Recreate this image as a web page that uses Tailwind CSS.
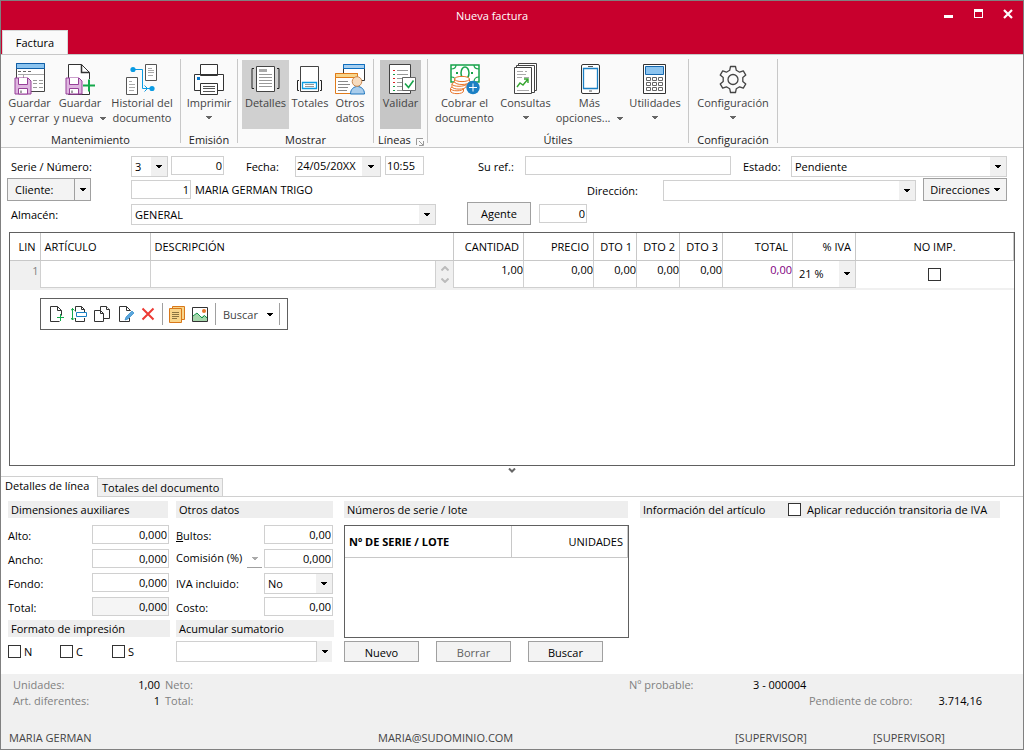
<!DOCTYPE html>
<html lang="es">
<head>
<meta charset="utf-8">
<title>Nueva factura</title>
<script src="https://cdn.jsdelivr.net/npm/@tailwindcss/browser@4"></script>
</head>
<body class="min-h-screen flex flex-col border border-[#808080] bg-white font-['Open_Sans','Noto_Sans',sans-serif] text-[11px] leading-[15px] text-black">

<svg class="hidden" aria-hidden="true">
  <symbol id="arrow" viewBox="0 0 6 3"><path d="M0 0h6v1H5v1H4v1H2V2H1V1H0z" fill="currentColor" shape-rendering="crispEdges"/></symbol>
  <symbol id="floppy" viewBox="0 0 18 18">
    <path d="M1 1h13l3 3v13H1z" fill="#dfb6e0" stroke="#963f98"/>
    <path d="M4.500 1v6.500h9V1" fill="#fff" stroke="#963f98"/>
    <path d="M4.500 17v-5.500h9V17z" fill="#fff" stroke="#963f98"/><path d="M7 13.500v2.500" stroke="#444"/>
  </symbol>
</svg>

<header class="bg-[#c8002d] text-white">
  <div class="h-[29px] grid grid-cols-3 items-center">
    <span></span>
    <h1 class="text-center pr-10">Nueva factura</h1>
    <div class="flex justify-end gap-[20px] pr-[10px] items-center -mt-1">
      <button aria-label="Minimizar" class="block"><svg width="10" height="10" class="block"><rect x="1" y="6" width="9" height="3" fill="#fff"/></svg></button>
      <button aria-label="Maximizar" class="block"><svg width="10" height="10" shape-rendering="crispEdges" class="block"><path d="M1 0h9v9H1zM2 3v5h7V3z" fill="#fff" fill-rule="evenodd"/></svg></button>
      <button aria-label="Cerrar" class="block"><svg width="10" height="10" class="block"><path d="M1 1l8 8M9 1L1 9" stroke="#fff" stroke-width="2.200"/></svg></button>
    </div>
  </div>
  <nav class="flex pl-px"><button class="h-[24px] w-[66px] bg-[#fafafa] text-black border-t border-x border-[#d8d8d8]">Factura</button></nav>
</header>

<section class="flex h-[94px] bg-[#fafafa] border-y border-[#c8c8c8] text-[#444] whitespace-nowrap pb-1 pt-1">
  <div class="flex flex-col w-[180px] border-r border-[#c8c8c8]">
    <div class="flex pl-1 h-[73px] shrink-0">
      <button class="w-[49px] flex flex-col items-center pt-[3px]">
        <svg width="32" height="33" viewBox="0 0 32 33" class="shrink-0"><path d="M2.500 1.500h28v28h-28z" fill="#fff" stroke="#444"/><path d="M2.500 1.500h28v5h-28z" fill="#8cc4ef" stroke="#0f5fa8"/><path d="M4 9.500h3m2 0h3m2 0h3" stroke="#666"/><path d="M4 12.500h26M9.500 12v5" stroke="#aaa"/><path d="M19 18.500h4m2 0h4m-10 3h4m2 0h4m-10 4h4m2 0h4" stroke="#999"/><use href="#floppy" x="0" y="15" width="18" height="18"/></svg>
        <span class="leading-[15px]">Guardar<br>y cerrar</span></button>
      <button class="w-[52px] flex flex-col items-center pt-[3px]">
        <svg width="32" height="33" viewBox="0 0 32 33" class="shrink-0"><path d="M4.500 2.500h13l8 8v22h-21z" fill="#fff" stroke="#333"/><path d="M17.500 2.500v8h8" fill="none" stroke="#333" stroke-width="1.500"/><path d="M18 17h14v12H18z" fill="#fafafa"/><path d="M19 23.500h12m-6-6v12" stroke="#14a84b" stroke-width="2"/><use href="#floppy" x="1" y="15" width="18" height="18"/></svg>
        <span>Guardar<br>y nueva <svg width="6" height="3" class="inline ml-1 mb-px text-[#666]"><use href="#arrow"/></svg></span></button>
      <button class="w-[72px] flex flex-col items-center pt-[3px]">
        <svg width="32" height="33" viewBox="0 0 32 33" class="shrink-0"><path d="M19.500 2.500h11v16h-11zM.500 15.500h11v17H.500z" fill="#fff" stroke="#555"/><path d="M22 6.500h4m-4 2h6m-6 2h6m-6 3h5M3 19.500h3m-3 3h6m-6 3h6m-6 3h5" stroke="#aaa"/><path d="M7 7.500h9.500v19h9" fill="none" stroke="#0a9be3"/><path d="M18.500 23.500l3 3-3 3" fill="none" stroke="#0a9be3"/><circle cx="7" cy="7.500" r="2.600" fill="#0a9be3"/><circle cx="26" cy="26.500" r="2.600" fill="#0a9be3"/></svg>
        <span>Historial del<br>documento</span></button>
    </div>
    <div class="text-center text-[#222]">Mantenimiento</div>
  </div>
  <div class="flex flex-col w-[57px] border-r border-[#c8c8c8]">
    <div class="flex h-[73px] shrink-0">
      <button class="w-full flex flex-col items-center pt-[3px]">
        <svg width="32" height="33" viewBox="0 0 32 33" class="shrink-0"><path d="M7.500 2.500h17v11h-17zM1.500 12.500h29v16h-29z" fill="#fff" stroke="#333"/><path d="M7.500 21.500h17v11h-17z" fill="#fff" stroke="#333"/><path d="M10 24.500h12m-12 2h12m-12 3h12" stroke="#555"/><path d="M4 15h3v3H4z" fill="#0a77c9"/></svg>
        <span>Imprimir</span><svg width="6" height="3" class="mt-[6px] text-[#666]"><use href="#arrow"/></svg></button>
    </div>
    <div class="text-center text-[#222]">Emisión</div>
  </div>
  <div class="flex flex-col w-[136px] border-r border-[#c8c8c8]">
    <div class="flex pl-1 h-[73px] shrink-0">
      <button class="w-[47px] mt-px mb-[3px] bg-[#d0d0d0] flex flex-col items-center pt-[2px]">
        <svg width="32" height="33" viewBox="0 0 32 33" class="shrink-0"><path d="M6.500 4.500h18v25h-18z" fill="#fff" stroke="#444"/><path d="M4 6.500H2v20h2m23-20h2v20h-2" fill="none" stroke="#222"/><path d="M9 7h8v3H9z" fill="#aaa"/><path d="M9 12.500h13m-13 3h13m-13 3h13m-13 3h13m-13 3h13" stroke="#999"/></svg>
        <span>Detalles</span></button>
      <button class="w-[42px] flex flex-col items-center pt-[3px]">
        <svg width="32" height="33" viewBox="0 0 32 33" class="shrink-0"><path d="M6.500 4.500h18v25h-18z" fill="#fff" stroke="#444"/><path d="M5 18.500H3.500v10H5m21-10h1.500v10H26" fill="none" stroke="#222"/><path d="M8.500 20.500h14v6h-14z" fill="#fff" stroke="#0a9be3" stroke-width="1.300"/><path d="M11 22.500h9m-9 2h9" stroke="#999"/></svg>
        <span>Totales</span></button>
      <button class="w-[38px] flex flex-col items-center pt-[3px]">
        <svg width="32" height="33" viewBox="0 0 32 33" class="shrink-0"><path d="M9.500 2.500h21v16h-21z" fill="#fff" stroke="#333"/><path d="M9.500 2.500h21v4h-21z" fill="#a7cff0" stroke="#0f6fc0"/><path d="M1.500 11.500h22v20h-22z" fill="#fff" stroke="#e07b1a"/><path d="M1.500 11.500h22v4h-22z" fill="#f8d58a" stroke="#e07b1a"/><path d="M4 19.500h10m-10 3h12m-12 3h10m-10 3h9" stroke="#888"/><path d="M16.500 32c0-10 14-10 14 0z" fill="#a9cdec" stroke="#1d74bd"/><circle cx="23" cy="19.500" r="4.800" fill="#f7dcbf" stroke="#c88850"/></svg>
        <span>Otros<br>datos</span></button>
    </div>
    <div class="text-center text-[#222]">Mostrar</div>
  </div>
  <div class="flex flex-col w-[54px] border-r border-[#c8c8c8]">
    <div class="flex pl-[6px] h-[73px] shrink-0">
      <button class="w-[41px] mt-px mb-[3px] bg-[#c6c6c6] flex flex-col items-center pt-[2px]">
        <svg width="32" height="33" viewBox="0 0 32 33" class="shrink-0"><path d="M4.500 2.500h21v29h-21z" fill="#fff" stroke="#444"/><path d="M12 8.500h11m-11 4h11m-11 4h10m-10 4h6m-6 4h6m-6 4h10" stroke="#999"/><path d="M8 8.500h2m-2 8h2m-2 4h2" stroke="#d22"/><path d="M8 12.500h2m-2 12h2m-2 4h2" stroke="#1a9a48"/><path d="M17.500 15.500h13v13h-13z" fill="#fff" stroke="#666"/><path d="M20 21.500l3.500 4 5-7" fill="none" stroke="#16a34a" stroke-width="1.600"/></svg>
        <span>Validar</span></button>
    </div>
    <div class="flex items-center gap-[5px] pl-1 text-[#222]">Líneas<button aria-label="Opciones de líneas"><svg width="8" height="8" class="block mt-1" fill="none" stroke="#999"><path d="M7 .500H.500V7M3 3l4 4M7.500 3v4.500H3"/></svg></button></div>
  </div>
  <div class="flex flex-col w-[261px] border-r border-[#c8c8c8]">
    <div class="flex pl-[5px] h-[73px] shrink-0">
      <button class="w-[63px] flex flex-col items-center pt-[3px]">
        <svg width="32" height="33" viewBox="0 0 32 33" class="shrink-0"><path d="M2 3h28v17H2z" fill="#fff" stroke="#16a34a" stroke-width="1.500"/><path d="M2 7c4 0 5-2 5-4m18 0c0 2 1 4 5 4M25 20c0-3 2-5 5-5M2 15c3 0 5 2 5 5" fill="none" stroke="#16a34a" stroke-width="1.200"/><ellipse cx="16" cy="11" rx="4" ry="6" fill="#fff" stroke="#16a34a" stroke-width="1.500"/><path d="M7 10h2v2H7zm15 0h2v2h-2z" fill="#16a34a"/><g fill="#fff" stroke="#e8742a"><path d="M5.500 17v12h15V17z" stroke="#fff"/><path d="M1.500 26.500V29c0 3.500 13 3.500 13 0v-2.500"/><ellipse cx="8" cy="26.500" rx="6.500" ry="2.300"/><path d="M3 22v2.500c0 3.500 14 3.500 14 0V22"/><ellipse cx="10" cy="22" rx="7" ry="2.300"/><path d="M5.500 17v2.500c0 4 15 4 15 0V17"/><ellipse cx="13" cy="17" rx="7.500" ry="2.600"/></g><circle cx="24" cy="25.500" r="6.700" fill="#1b80c4"/><path d="M20 25.500h8m-4-4v8" stroke="#fff"/></svg>
        <span>Cobrar el<br>documento</span></button>
      <button class="w-[59px] flex flex-col items-center pt-[3px]">
        <svg width="32" height="33" viewBox="0 0 32 33" class="shrink-0"><g fill="#fff" stroke="#444"><path d="M8.500 1.500h18v27h-18z"/><path d="M6.500 3.500h18v27h-18z"/><path d="M4.500 5.500h17v26h-17z"/></g><path d="M7 9.500h6m2 0h2M7 12.500h9m-9 3h5m2 0h5M7 28.500h12" stroke="#aaa"/><path d="M7 25l3-4 3 2 5-6m-4 0h4v4" fill="none" stroke="#35a52f" stroke-width="1.400"/></svg>
        <span>Consultas</span><svg width="6" height="3" class="mt-[6px] text-[#666]"><use href="#arrow"/></svg></button>
      <button class="w-[69px] flex flex-col items-center pt-[3px]">
        <svg width="32" height="33" viewBox="0 0 32 33" class="shrink-0"><rect x="7.500" y="2.500" width="18" height="29" rx="1.500" fill="#fff" stroke="#333"/><path d="M9.500 6.500h14v20h-14z" fill="#fff" stroke="#1b80c4" stroke-width="1.300"/><path d="M14 4.500h5m-4 24.500h3" stroke="#555"/></svg>
        <span>Más<br>opciones... <svg width="6" height="3" class="inline ml-1 mb-px text-[#666]"><use href="#arrow"/></svg></span></button>
      <button class="w-[62px] flex flex-col items-center pt-[3px]">
        <svg width="32" height="33" viewBox="0 0 32 33" class="shrink-0"><path d="M4.500 2.500h22v29h-22z" fill="#fff" stroke="#333"/><path d="M6.500 4.500h18v8h-18z" fill="#8cc4ef" stroke="#1668ae"/><path d="M7.500 15.500h4v3h-4zm6 0h4v3h-4zm6 0h4v3h-4zm-12 5h4v3h-4zm6 0h4v3h-4zm6 0h4v3h-4zm-12 5h4v3h-4zm6 0h4v3h-4zm6 0h4v3h-4z" fill="#fff" stroke="#666"/></svg>
        <span>Utilidades</span><svg width="6" height="3" class="mt-[6px] text-[#666]"><use href="#arrow"/></svg></button>
    </div>
    <div class="text-center text-[#222]">Útiles</div>
  </div>
  <div class="flex flex-col w-[89px] border-r border-[#c8c8c8]">
    <div class="flex h-[73px] shrink-0">
      <button class="w-full flex flex-col items-center pt-[3px]">
        <svg width="32" height="33" viewBox="0 0 32 33" class="shrink-0" fill="none" stroke="#444" stroke-width="1.300"><path stroke-linejoin="round" d="M13.500 4.500h5l.8 3.800 3.300 1.900 3.700-1.300 2.500 4.200-3 2.500v3.800l3 2.500-2.500 4.200-3.700-1.300-3.300 1.900-.8 3.800h-5l-.8-3.800-3.300-1.900-3.700 1.300-2.500-4.200 3-2.500v-3.800l-3-2.500 2.500-4.200 3.700 1.300 3.300-1.900z"/><circle cx="16" cy="17.500" r="5"/></svg>
        <span>Configuración</span><svg width="6" height="3" class="mt-[6px] text-[#666]"><use href="#arrow"/></svg></button>
    </div>
    <div class="text-center text-[#222]">Configuración</div>
  </div>
</section>

<form class="pt-[7px] pr-4 flex flex-col">
  <div class="h-[23px] flex items-center">
    <label for="serie" class="w-[130px] pl-[10px]">Serie / Número:</label>
    <div class="relative w-[37px] h-[21px] border border-[#d0d0d0]"><select id="serie" class="appearance-none block w-full h-full pl-[3px] outline-none"><option>3</option></select><span class="absolute inset-y-0 right-0 w-[16px] bg-[#f0f0f0] flex items-center justify-center pointer-events-none"><svg width="6" height="3"><use href="#arrow"/></svg></span></div>
    <input aria-label="Número" value="0" class="ml-[3px] mb-[2px] w-[53px] h-[19px] border border-[#d0d0d0] text-right pr-px outline-none">
    <label for="fecha" class="w-[49px] ml-[22px]">Fecha:</label>
    <div class="relative w-[86px] h-[21px] border border-[#d0d0d0]"><select id="fecha" class="appearance-none block w-full h-full pl-px pb-[3px] outline-none"><option>24/05/20XX</option></select><span class="absolute inset-y-0 right-0 w-[18px] bg-[#f0f0f0] flex items-center justify-center pointer-events-none"><svg width="6" height="3"><use href="#arrow"/></svg></span></div>
    <input aria-label="Hora" value="10:55" class="ml-1 mb-[2px] w-[39px] h-[19px] border border-[#d0d0d0] pl-px outline-none">
    <label for="ref" class="ml-[54px] w-[47px]">Su ref.:</label>
    <input id="ref" class="mb-[2px] flex-1 min-w-0 h-[19px] border border-[#d0d0d0] outline-none">
    <label for="estado" class="ml-3 w-[48px]">Estado:</label>
    <div class="relative w-[216px] h-[21px] border border-[#d0d0d0]"><select id="estado" class="appearance-none block w-full h-full pl-[3px] outline-none"><option>Pendiente</option></select><span class="absolute inset-y-0 right-0 w-4 bg-[#f0f0f0] flex items-center justify-center pointer-events-none"><svg width="6" height="3"><use href="#arrow"/></svg></span></div>
  </div>
  <div class="h-[23px] flex items-center">
    <button type="button" class="ml-[6px] w-[68px] h-[23px] border border-[#a0a0a0] bg-[#f3f3f3] text-left pl-[7px]">Cliente:</button><button type="button" aria-label="Más clientes" class="w-[16px] h-[23px] border border-l-0 border-[#a0a0a0] bg-[#f3f3f3] flex items-center justify-center"><svg width="6" height="3"><use href="#arrow"/></svg></button>
    <input aria-label="Cliente" value="1" class="ml-[40px] w-[60px] h-[19px] border border-[#d0d0d0] text-right pr-px outline-none">
    <output class="ml-1 pb-px">MARIA GERMAN TRIGO</output>
    <label for="dir" class="ml-auto w-[76px] pt-[2px]">Dirección:</label>
    <div class="relative w-[253px] h-[21px] border border-[#d0d0d0] mt-[2px]"><select id="dir" class="appearance-none block w-full h-full outline-none"><option></option></select><span class="absolute inset-y-0 right-0 w-4 bg-[#f0f0f0] flex items-center justify-center pointer-events-none"><svg width="6" height="3"><use href="#arrow"/></svg></span></div>
    <button type="button" class="ml-[7px] w-[84px] h-[23px] border border-[#a0a0a0] bg-[#f3f3f3] flex items-center justify-center gap-1">Direcciones<svg width="6" height="3"><use href="#arrow"/></svg></button>
  </div>
  <div class="h-[23px] mt-px flex items-center">
    <label for="almacen" class="w-[130px] pl-[10px] pt-[2px]">Almacén:</label>
    <div class="relative w-[305px] h-[21px] mt-[2px] border border-[#d0d0d0]"><select id="almacen" class="appearance-none block w-full h-full pl-[3px] outline-none"><option>GENERAL</option></select><span class="absolute inset-y-0 right-0 w-4 bg-[#f0f0f0] flex items-center justify-center pointer-events-none"><svg width="6" height="3"><use href="#arrow"/></svg></span></div>
    <button type="button" class="ml-[31px] w-[64px] h-[23px] border border-[#a0a0a0] bg-[#f3f3f3]">Agente</button>
    <input aria-label="Agente" value="0" class="ml-2 w-[48px] h-[19px] border border-[#d0d0d0] text-right pr-px outline-none">
  </div>
</form>

<main class="mt-[7px] ml-2 mr-[8px] flex-1 border border-[#606060]">
  <table class="w-full table-fixed border-collapse">
    <colgroup><col class="w-[30px]"><col class="w-[110px]"><col><col class="w-[70px]"><col class="w-[70px]"><col class="w-[43px]"><col class="w-[43px]"><col class="w-[43px]"><col class="w-[70px]"><col class="w-[63px]"><col class="w-[158px]"></colgroup>
    <thead><tr class="h-[27px] border-b border-[#c8c8c8]">
      <th class="font-normal border-r border-[#c8c8c8] text-right pr-1">LIN</th><th class="font-normal border-r border-[#c8c8c8] text-left pl-1">ARTÍCULO</th><th class="font-normal border-r border-[#c8c8c8] text-left pl-1">DESCRIPCIÓN</th><th class="font-normal border-r border-[#c8c8c8] text-right pr-1">CANTIDAD</th><th class="font-normal border-r border-[#c8c8c8] text-right pr-1">PRECIO</th><th class="font-normal border-r border-[#c8c8c8] text-right pr-1">DTO 1</th><th class="font-normal border-r border-[#c8c8c8] text-right pr-1">DTO 2</th><th class="font-normal border-r border-[#c8c8c8] text-right pr-1">DTO 3</th><th class="font-normal border-r border-[#c8c8c8] text-right pr-1">TOTAL</th><th class="font-normal border-r border-[#c8c8c8] text-right pr-1">% IVA</th><th class="font-normal border-r border-[#c8c8c8] text-center">NO IMP.</th>
    </tr></thead>
    <tbody><tr class="h-[29px] border-b-2 border-[#f0f0f0]">
      <td class="bg-[#f0f0f0] border-r border-[#d0d0d0] text-[#808080] text-right align-top pr-px pt-[2px]">1</td>
      <td class="border-x border-[#d0d0d0]"><input aria-label="Artículo" class="block w-full h-[27px] border-b border-[#d0d0d0] outline-none"></td>
      <td class="border-x border-[#d0d0d0]"><div class="flex h-[27px]"><input aria-label="Descripción" class="flex-1 min-w-0 border-r border-b border-[#d0d0d0] outline-none"><span class="w-[17px] bg-[#f0f0f0] flex flex-col justify-between items-center py-[5px]"><svg width="8" height="5" fill="none" stroke="#bbb" stroke-width="2"><path d="M.500 4.500L4 1l3.500 3.500"/></svg><svg width="8" height="5" fill="none" stroke="#bbb" stroke-width="2"><path d="M.500 .500L4 4 7.500 .500"/></svg></span></div></td>
      <td class="border-x border-[#d0d0d0]"><input aria-label="Cantidad" value="1,00" class="block w-full h-[27px] pb-[8px] border-b border-[#d0d0d0] text-right outline-none"></td>
      <td class="border-x border-[#d0d0d0]"><input aria-label="Precio" value="0,00" class="block w-full h-[27px] pb-[8px] border-b border-[#d0d0d0] text-right outline-none"></td>
      <td class="border-x border-[#d0d0d0]"><input aria-label="Dto 1" value="0,00" class="block w-full h-[27px] pb-[8px] border-b border-[#d0d0d0] text-right outline-none"></td>
      <td class="border-x border-[#d0d0d0]"><input aria-label="Dto 2" value="0,00" class="block w-full h-[27px] pb-[8px] border-b border-[#d0d0d0] text-right outline-none"></td>
      <td class="border-x border-[#d0d0d0]"><input aria-label="Dto 3" value="0,00" class="block w-full h-[27px] pb-[8px] border-b border-[#d0d0d0] text-right outline-none"></td>
      <td class="border-x border-[#d0d0d0]"><input aria-label="Total" value="0,00" class="block w-full h-[27px] pb-[8px] border-b border-[#d0d0d0] text-right text-[#800080] outline-none"></td>
      <td class="border-x border-[#d0d0d0]"><div class="relative h-[27px] border-b border-[#d0d0d0]"><select aria-label="IVA" class="appearance-none block w-full h-full pl-[6px] outline-none"><option>21 %</option></select><span class="absolute inset-y-0 right-0 w-4 bg-[#f0f0f0] flex items-center justify-center pointer-events-none"><svg width="6" height="3"><use href="#arrow"/></svg></span></div></td>
      <td><input type="checkbox" aria-label="No imprimir" class="appearance-none block mx-auto w-[13px] h-[13px] border border-[#333] bg-white"></td>
    </tr></tbody>
  </table>
  <div class="ml-[30px] mt-[8px] w-[248px] h-[32px] border border-[#606060] flex items-center pl-2 text-[#444]" role="toolbar">
    <button aria-label="Nueva línea"><svg width="16" height="18" class="block"><path d="M10.500 16.500h-9v-15h7l4 4v5M8.500 1.500v4h4" fill="none" stroke="#333"/><path d="M8 12.500h7m-3.500-3.500v7" stroke="#14a84b"/></svg></button>
    <button aria-label="Insertar línea" class="ml-[6px]"><svg width="17" height="18" class="block"><path d="M4.500 6.500v-5h6l3 3v3M10.500 1.500v3h3M4.500 13v3.500h9V13" fill="none" stroke="#333"/><path d="M5.500 7.500h10v4h-10z" fill="#fff" stroke="#1b80c4"/><path d="M1.500 3v12M0 5.500l1.500-2 2 2M0 13l1.500 2 2-2" fill="none" stroke="#14a84b"/></svg></button>
    <button aria-label="Duplicar" class="ml-[6px]"><svg width="17" height="18" class="block" fill="#fff" stroke="#333"><path d="M6.500 1.500h6l3 3v9h-9z"/><path d="M12.500 1.500v3h3M.500 5.500h6l3 3v8h-9zM6.500 5.500v3h3"/></svg></button>
    <button aria-label="Modificar" class="ml-[7px]"><svg width="16" height="18" class="block"><path d="M11.500 13v3.500h-10v-15h7l4 4M8.500 1.500v4h4" fill="#fff" stroke="#333"/><path d="M7 15l1-3 6-6 2 2-6 6z" fill="#5ba6dd" stroke="#1b80c4" stroke-width=".600"/></svg></button>
    <button aria-label="Borrar línea" class="ml-[7px]"><svg width="14" height="14" class="block"><path d="M1.500 1.500l11 11m0-11l-11 11" stroke="#ec3a34" stroke-width="2"/></svg></button>
    <span class="ml-[7px] w-px h-[22px] bg-[#a0a0a0]"></span>
    <button aria-label="Notas" class="ml-[6px]"><svg width="16" height="17" class="block"><path d="M3.500.500h12v13h-12z" fill="#f8d58a" stroke="#d9781a"/><path d="M.500 2.500h12v14H.500z" fill="#f8d58a" stroke="#d9781a"/><path d="M3 6.500h7m-7 2h7m-7 2h7m-7 2h5" stroke="#8a7440"/></svg></button>
    <button aria-label="Imagen" class="ml-[7px]"><svg width="16" height="15" class="block"><path d="M.500.500h15v14H.500z" fill="#fff" stroke="#333"/><path d="M1 14V9l4-3 4 4 3-2 3 2v4z" fill="#a5d6ab"/><path d="M1 9l4-3 5 5 2.500-2.500L15 11" fill="none" stroke="#14924b"/><circle cx="12" cy="4" r="2" fill="#e8742a"/></svg></button>
    <span class="ml-[7px] w-px h-[22px] bg-[#a0a0a0]"></span>
    <button class="ml-[7px] flex items-center gap-[9px]">Buscar<svg width="6" height="3" class="text-black"><use href="#arrow"/></svg></button>
    <span class="ml-[6px] w-px h-[22px] bg-[#a0a0a0]"></span>
  </div>
</main>
<button aria-label="Contraer panel" class="h-[10px] pb-[2px] flex justify-center items-center"><svg width="8" height="5" fill="none" stroke="#666" stroke-width="2"><path d="M1 .500L4 3.500 7 .500"/></svg></button>

<nav class="flex items-end border-b border-[#d0d0d0] h-[21px]">
  <button class="w-[97px] h-[21px] -mb-px bg-white border-t border-r border-[#d0d0d0] text-left pl-1 pb-[3px] whitespace-nowrap">Detalles de línea</button>
  <button class="w-[125px] h-[18px] bg-[#f0f0f0] border-t border-r border-[#d0d0d0] text-left pl-1 whitespace-nowrap">Totales del documento</button>
</nav>

<section class="flex pt-1 pl-[7px] pr-[23px] h-[177px]">
  <div class="w-[162px]">
    <h2 class="h-[17px] w-[160px] bg-[#eee] pl-[3px] mb-[7px] leading-[18px]">Dimensiones auxiliares</h2>
    <div class="h-6 flex justify-between w-[161px]"><label for="alto" class="pt-[3px]">Alto:</label><input id="alto" value="0,000" class="w-[77px] h-[19px] pb-px border border-[#d0d0d0] text-right pr-px outline-none"></div>
    <div class="h-6 flex justify-between w-[161px]"><label for="ancho" class="pt-[3px]">Ancho:</label><input id="ancho" value="0,000" class="w-[77px] h-[19px] pb-px border border-[#d0d0d0] text-right pr-px outline-none"></div>
    <div class="h-6 flex justify-between w-[161px]"><label for="fondo" class="pt-[3px]">Fondo:</label><input id="fondo" value="0,000" class="w-[77px] h-[19px] pb-px border border-[#d0d0d0] text-right pr-px outline-none"></div>
    <div class="h-[23px] flex justify-between w-[161px]"><label for="total" class="pt-[3px]">Total:</label><input id="total" value="0,000" readonly class="w-[77px] h-[19px] pb-px border border-[#d0d0d0] bg-[#f5f5f5] text-right pr-px outline-none"></div>
    <h2 class="h-[17px] bg-[#eee] pl-[3px] leading-[18px]">Formato de impresión</h2>
    <div class="flex pt-[7px]">
      <label class="w-[52px] flex items-center gap-[3px]"><input type="checkbox" class="appearance-none w-[13px] h-[13px] border border-[#333]">N</label>
      <label class="w-[52px] flex items-center gap-[3px]"><input type="checkbox" class="appearance-none w-[13px] h-[13px] border border-[#333]">C</label>
      <label class="flex items-center gap-[3px]"><input type="checkbox" class="appearance-none w-[13px] h-[13px] border border-[#333]">S</label>
    </div>
  </div>
  <div class="w-[158px] ml-[6px]">
    <h2 class="h-[17px] w-[157px] bg-[#eee] pl-[3px] mb-[7px] leading-[18px]">Otros datos</h2>
    <div class="h-6 flex justify-between w-[157px]"><label for="bultos" class="pt-[3px]"><u>B</u>ultos:</label><input id="bultos" value="0,00" class="w-[69px] h-[19px] pb-px border border-[#d0d0d0] text-right pr-px outline-none"></div>
    <div class="h-6 flex w-[157px]"><label for="comision" class="w-[71px] pt-px">Comisión (%)</label><button aria-label="Tipo de comisión" class="w-[15px] h-[19px] mr-[2px] border-b border-[#a0a0a0] text-[#aaa] flex items-center justify-center"><svg width="6" height="3"><use href="#arrow"/></svg></button><input id="comision" value="0,000" class="w-[69px] h-[19px] pb-px border border-[#d0d0d0] text-right pr-px outline-none"></div>
    <div class="h-6 flex justify-between w-[157px]"><label for="iva" class="pt-[3px]">IVA incluido:</label><div class="relative w-[69px] h-[21px] border border-[#d0d0d0]"><select id="iva" class="appearance-none block w-full h-full pl-[3px] outline-none"><option>No</option></select><span class="absolute inset-y-0 right-0 w-4 bg-[#f0f0f0] flex items-center justify-center pointer-events-none"><svg width="6" height="3"><use href="#arrow"/></svg></span></div></div>
    <div class="h-[23px] flex justify-between w-[157px]"><label for="costo" class="pt-[3px]">Costo:</label><input id="costo" value="0,00" class="w-[69px] h-[19px] pb-px border border-[#d0d0d0] text-right pr-px outline-none"></div>
    <h2 class="h-[17px] bg-[#eee] pl-[3px] leading-[18px]">Acumular sumatorio</h2>
    <div class="relative w-[156px] mt-1 h-[21px]"><select aria-label="Acumular sumatorio" class="appearance-none block w-[141px] h-full border border-[#d0d0d0] outline-none"><option></option></select><span class="absolute inset-y-0 right-0 w-[15px] bg-[#f0f0f0] flex items-center justify-center pointer-events-none"><svg width="6" height="3"><use href="#arrow"/></svg></span></div>
  </div>
  <div class="w-[285px] ml-[10px]">
    <h2 class="h-[17px] w-[284px] bg-[#eee] pl-[3px] mb-[7px] leading-[18px]">Números de serie / lote</h2>
    <div class="h-[113px] border border-[#606060]">
      <table class="w-full table-fixed border-collapse"><thead><tr class="h-[31px] border-b border-[#c8c8c8]"><th class="w-[166px] text-left pl-1 border-r border-[#c8c8c8]">Nº DE SERIE / LOTE</th><th class="font-normal text-right pr-1 border-r border-[#c8c8c8]">UNIDADES</th></tr></thead></table>
    </div>
    <div class="flex gap-[17px] mt-[3px]">
      <button class="w-[75px] h-[21px] border border-[#a0a0a0] bg-[#f3f3f3] pt-px">Nuevo</button>
      <button class="w-[75px] h-[21px] border border-[#a0a0a0] bg-[#f3f3f3] pt-px text-[#606060]">Borrar</button>
      <button class="w-[75px] h-[21px] border border-[#a0a0a0] bg-[#f3f3f3] pt-px">Buscar</button>
    </div>
  </div>
  <div class="flex-1 ml-[11px]">
    <div class="h-[17px] bg-[#eee] pl-[3px] flex items-center"><h2 class="w-[145px]">Información del artículo</h2><label class="flex items-center gap-[6px] pb-px whitespace-nowrap"><input type="checkbox" class="appearance-none w-[13px] h-[13px] border border-[#333] bg-white">Aplicar reducción transitoria de IVA</label></div>
  </div>
</section>

<footer class="h-[75px] bg-[#f0f0f0] pt-[3px] text-[#808080]">
  <div class="flex h-4 pl-3"><span class="w-[100px]">Unidades:</span><span class="w-[47px] text-right text-black">1,00</span><span class="pl-[5px]">Neto:</span><span class="ml-auto w-[124px]">Nº probable:</span><span class="w-[270px] text-black">3 - 000004</span></div>
  <div class="flex h-4 pl-3"><span class="w-[100px]">Art. diferentes:</span><span class="w-[47px] text-right text-black">1</span><span class="pl-[5px]">Total:</span><span class="ml-auto w-[120px]">Pendiente de cobro:</span><span class="w-[53px] mr-[41px] text-right text-black">3.714,16</span></div>
  <div class="flex pl-2 pt-[21px] text-[#444]"><span class="w-[369px]">MARIA GERMAN</span><span>MARIA@SUDOMINIO.COM</span><span class="ml-auto w-[138px]">[SUPERVISOR]</span><span class="w-[150px]">[SUPERVISOR]</span></div>
</footer>
</body>
</html>
